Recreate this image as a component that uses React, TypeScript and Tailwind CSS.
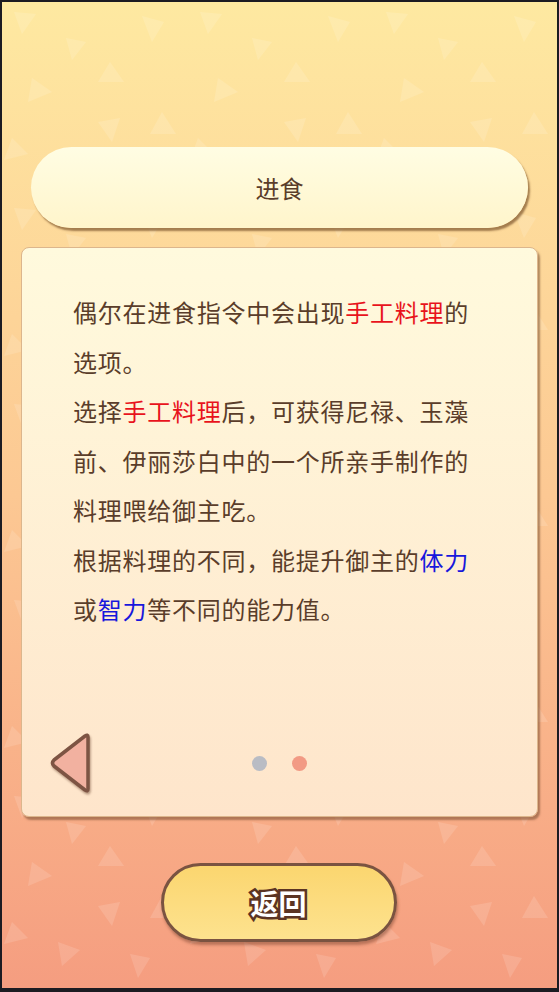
import React from 'react'

const cjk = { fontFamily: '"Noto Sans CJK SC", "Noto Sans", sans-serif' }

// scattered soft triangles tiled over the backdrop
function TrianglePattern() {
  return (
    <svg className="absolute inset-0 h-full w-full" xmlns="http://www.w3.org/2000/svg">
      <defs>
        <pattern id="tri" width="186" height="196" patternUnits="userSpaceOnUse">
          <g fill="#ffffff" fillOpacity="0.13">
            <polygon points="12,10 34,12 20,32" />
            <polygon points="64,36 84,40 70,58" />
            <polygon points="108,60 122,80 96,80" />
            <polygon points="30,76 50,90 26,100" />
            <polygon points="140,14 162,20 150,40" />
            <polygon points="96,120 118,116 110,140" />
            <polygon points="10,136 26,152 2,158" />
            <polygon points="160,110 174,132 148,132" />
            <polygon points="56,156 78,164 60,180" />
            <polygon points="128,168 148,172 136,192" />
          </g>
        </pattern>
      </defs>
      <rect width="100%" height="100%" fill="url(#tri)" />
    </svg>
  )
}

function BackArrow() {
  return (
    <svg width="46" height="60" viewBox="0 0 46 60" className="drop-shadow-[1px_2px_1px_rgba(90,50,30,0.45)]">
      <path
        d="M39 4 L39 56 Q39 59 36 57 L5 33 Q2 30 5 27 L36 3 Q39 1 39 4 Z"
        fill="#f2b1a0"
        stroke="#7d5443"
        strokeWidth="3.5"
        strokeLinejoin="round"
      />
    </svg>
  )
}

const Red = ({ children }: { children: React.ReactNode }) => <span className="text-[#e8131c]">{children}</span>
const Blue = ({ children }: { children: React.ReactNode }) => <span className="text-[#1717dc]">{children}</span>

export default function App() {
  return (
    <div className="h-[992px] w-[559px] bg-[#1c1b22] pt-[2px] px-[2px] pb-[4px]" style={cjk}>
      <div className="relative h-full w-full overflow-hidden bg-gradient-to-b from-[#fee9a1] via-[#fcc893] to-[#f59d80]">
        <TrianglePattern />

        <div className="relative flex h-full flex-col pt-[145px]">
          {/* title pill */}
          <div className="ml-[29px] flex h-[81px] w-[497px] items-center justify-center rounded-full bg-gradient-to-b from-[#fffde3] to-[#fff5cb] shadow-[2px_3px_2px_rgba(125,85,45,0.7)]">
            <span className="text-[24px] text-[#5a3d2a]">进食</span>
          </div>

          {/* description card */}
          <div className="ml-[19px] mt-[19px] flex h-[570px] w-[517px] flex-col rounded-[8px] border border-[#dcb68c] bg-gradient-to-b from-[#fffadd] to-[#fee5cb] shadow-[2px_3px_2px_rgba(115,75,45,0.55)]">
            <div className="w-[415px] pl-[51px] pt-[39px] text-[24px] leading-[49.5px] tracking-[0.75px] text-[#5a3d2a]">
              <p className="w-[405px]">
                偶尔在进食指令中会出现<Red>手工料理</Red>的选项。
              </p>
              <p className="w-[405px]">
                选择<Red>手工料理</Red>后，可获得尼禄、玉藻前、伊丽莎白中的一个所亲手制作的料理喂给御主吃。
              </p>
              <p className="w-[405px]">
                根据料理的不同，能提升御主的<Blue>体力</Blue>或<Blue>智力</Blue>等不同的能力值。
              </p>
            </div>

            <div className="mt-auto mb-[23px] grid grid-cols-[1fr_auto_1fr] items-center px-[27px]">
              <div>
                <BackArrow />
              </div>
              <div className="flex gap-[25px]">
                <span className="h-[15px] w-[15px] rounded-full bg-[#b9bcc4]" />
                <span className="h-[15px] w-[15px] rounded-full bg-[#f29a84]" />
              </div>
              <div />
            </div>
          </div>

          {/* return button */}
          <div className="mt-[46px] flex justify-center pr-[2px]">
            <button className="flex h-[79px] w-[236px] items-center justify-center rounded-full border-[3px] border-[#7a5341] bg-gradient-to-b from-[#fbd66f] to-[#fde28e] shadow-[1px_3px_3px_rgba(110,60,40,0.45)]">
              <span className="text-[28px] font-semibold text-white [-webkit-text-stroke:5px_#5b3423] [paint-order:stroke_fill]">
                返回
              </span>
            </button>
          </div>
        </div>
      </div>
    </div>
  )
}
